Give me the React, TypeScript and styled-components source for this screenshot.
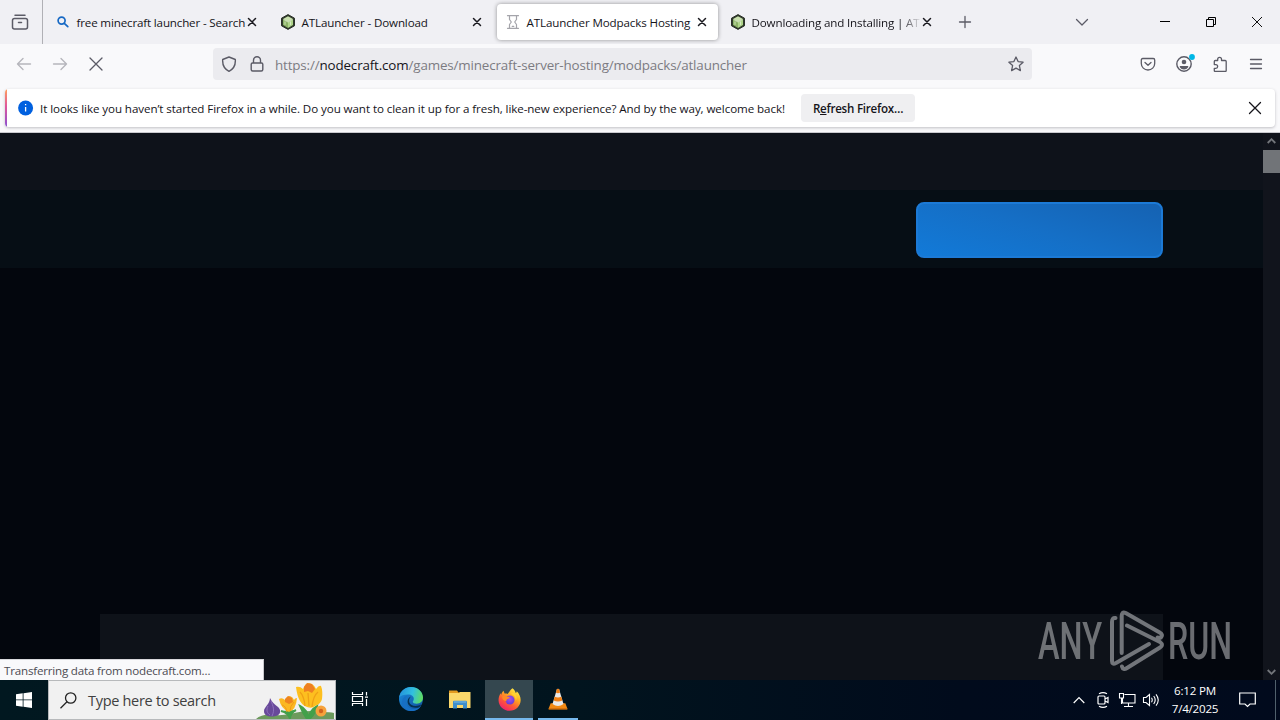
import React from 'react';
import styled, { createGlobalStyle } from 'styled-components';

const Global = createGlobalStyle`
  * { box-sizing: border-box; }
  body { margin: 0; background: #03060d; overflow: hidden; }
  svg { display: block; flex: none; }
`;

const Screen = styled.div`
  width: 1280px;
  height: 720px;
  display: flex;
  flex-direction: column;
  overflow: hidden;
  position: relative;
  font-family: 'Open Sans', 'Noto Sans', sans-serif;
  font-size: 11.6px;
  color: #15141a;
`;

/* ---------- Tab strip ---------- */
const TabStrip = styled.div`
  height: 44px;
  flex: none;
  display: flex;
  align-items: center;
  background: #f0f0f4;
`;
const FirefoxView = styled.div`
  width: 43px;
  height: 44px;
  border-right: 1px solid #b0b0b5;
  display: flex;
  align-items: center;
  padding-left: 11px;
  margin-right: 4px;
`;
const TabBox = styled.div<{ $active?: boolean }>`
  width: 221px;
  height: 36px;
  margin-right: 4px;
  padding-left: 8px;
  display: flex;
  align-items: center;
  border-radius: 4px;
  background: ${p => (p.$active ? '#fff' : 'transparent')};
  box-shadow: ${p => (p.$active ? '0 0 4px rgba(0,0,0,.4)' : 'none')};
`;
const TabTitle = styled.div<{ $spacing: number; $fade?: number }>`
  width: 168.5px;
  margin-left: 5.5px;
  padding-top: 2px;
  line-height: 18px;
  white-space: nowrap;
  letter-spacing: ${p => p.$spacing}px;
  ${p => p.$fade && `mask-image: linear-gradient(to right, #000 ${168 - p.$fade}px, transparent 170px);`}
`;
const CloseSlot = styled.div`
  margin-left: 2px;
`;
const NewTab = styled.div`
  width: 36px;
  display: flex;
  justify-content: center;
`;
const StripSpacer = styled.div`
  flex: 1;
`;
const AllTabs = styled.div`
  width: 36px;
  margin-right: 42px;
  display: flex;
  justify-content: center;
`;
const WindowButton = styled.div`
  width: 46px;
  display: flex;
  justify-content: center;
`;

/* ---------- Navigation ---------- */
const NavBar = styled.div`
  height: 44px;
  flex: none;
  display: flex;
  align-items: center;
  padding: 0 6px;
  background: #f9f9fb;
  margin-bottom: -4px;
  padding-bottom: 4px;
`;
const NavButton = styled.div<{ $dim?: boolean }>`
  width: 36px;
  display: flex;
  justify-content: center;
  opacity: ${p => (p.$dim ? 0.42 : 1)};
`;
const UrlBar = styled.div`
  width: 819px;
  height: 32px;
  margin-left: 99px;
  margin-right: 98px;
  border-radius: 4px;
  background: #ebebef;
  display: flex;
  align-items: center;
  padding: 0 8px;
`;
const UrlText = styled.div`
  flex: 1;
  margin-left: 10px;
  font-size: 13.4px;
  line-height: 20px;
  letter-spacing: -0.15px;
  color: #7c7b82;
  white-space: nowrap;
  padding-top: 1px;
  b { font-weight: 400; color: #15141a; }
`;
const LockSlot = styled.div`
  margin-left: 12px;
`;

/* ---------- Notification ---------- */
const NoticeArea = styled.div`
  height: 49px;
  flex: none;
  padding: 5px 5px 0 5px;
  background: #f9f9fb;
  border-bottom: 1px solid #c9c9ce;
`;
const Notice = styled.div`
  height: 38px;
  display: flex;
  align-items: center;
  border-radius: 4px;
  overflow: hidden;
  background: #fff;
  box-shadow: 0 1px 3px rgba(58, 57, 68, 0.3);
`;
const Accent = styled.div`
  width: 2px;
  height: 38px;
  margin-right: 11px;
  background: linear-gradient(#ff9f5b, #e0569b 45%, #8a4fd0);
`;
const NoticeText = styled.div`
  width: 745px;
  margin-left: 6px;
  margin-right: 16px;
  padding-top: 2px;
  white-space: nowrap;
  line-height: 18px;
  letter-spacing: -0.078px;
`;
const RefreshButton = styled.div`
  width: 114px;
  height: 28px;
  border-radius: 4px;
  background: #efeff1;
  font-weight: 600;
  line-height: 30px;
  text-align: center;
  letter-spacing: -0.25px;
  white-space: nowrap;
`;
const NoticeClose = styled.div`
  margin-left: auto;
  margin-right: 12px;
`;

/* ---------- Web page ---------- */
const Viewport = styled.div`
  height: 547px;
  flex: none;
  display: flex;
  background: #03060d;
`;
const Page = styled.div`
  width: 1263px;
  display: flex;
  flex-direction: column;
`;
const TopBand = styled.div`
  height: 57px;
  background: #0e121a;
`;
const ActionBand = styled.div`
  height: 78px;
  background: #060e15;
  display: flex;
  justify-content: flex-end;
  padding: 12px 100px 0 0;
`;
const BlueButton = styled.div`
  width: 247px;
  height: 56px;
  border-radius: 8px;
  border: 2px solid #1c7ad6;
  background: linear-gradient(17deg, #127ad8, #156fc6 50%, #1562b2);
`;
const Panel = styled.div`
  width: 1063px;
  height: 66px;
  margin: auto 0 0 100px;
  background: #0e1219;
`;
const ScrollBar = styled.div`
  width: 17px;
  background: #11141c;
  display: flex;
  flex-direction: column;
  align-items: center;
  padding: 5px 0 5px;
`;
const Thumb = styled.div`
  width: 17px;
  height: 23px;
  margin-top: 6px;
  margin-bottom: auto;
  background: #717478;
`;

/* ---------- Overlays ---------- */
const StatusPopup = styled.div`
  position: absolute;
  left: 0;
  top: 659px;
  width: 264px;
  height: 21px;
  padding-left: 4px;
  border-top: 1px solid #d8d8dc;
  border-right: 1px solid #c8c8cc;
  background: #f9f9fb;
  color: #4c4b52;
  line-height: 21px;
  letter-spacing: -0.2px;
  white-space: nowrap;
`;
const Watermark = styled.div`
  position: absolute;
  left: 1029px;
  top: 604px;
`;

/* ---------- Taskbar ---------- */
const TaskBar = styled.div`
  height: 40px;
  flex: none;
  display: flex;
  align-items: center;
  background: linear-gradient(90deg, #011820, #01141e 45%, #010b1c 75%, #010a1d);
`;
const StartButton = styled.div`
  width: 48px;
  display: flex;
  justify-content: center;
`;
const SearchBox = styled.div`
  width: 288px;
  height: 40px;
  border: 1px solid #b7b9bb;
  background: #f1f1f1;
  display: flex;
  align-items: center;
  padding-left: 11px;
`;
const SearchText = styled.div`
  width: 168px;
  margin-left: 11px;
  font-size: 14.5px;
  color: #404040;
  letter-spacing: -0.3px;
  white-space: nowrap;
`;
const TaskItem = styled.div<{ $width: number; $active?: boolean; $running?: boolean }>`
  width: ${p => p.$width}px;
  height: 40px;
  display: flex;
  align-items: center;
  justify-content: center;
  background: ${p => (p.$active ? '#34474f' : 'transparent')};
  border-bottom: ${p => (p.$running ? '2px solid #76b9ed' : '2px solid transparent')};
  margin-right: ${p => (p.$active ? 5 : 0)}px;
`;
const Tray = styled.div`
  margin-left: auto;
  display: flex;
  align-items: center;
  color: #fff;
`;
const TrayIcon = styled.div`
  width: 24px;
  display: flex;
  justify-content: center;
`;
const Clock = styled.div`
  width: 64px;
  text-align: center;
  line-height: 18px;
  padding-bottom: 1px;
  letter-spacing: -0.22px;
  white-space: nowrap;
`;
const ActionCenter = styled.div`
  width: 40px;
  display: flex;
  justify-content: center;
`;
const ShowDesktop = styled.div`
  width: 5px;
  height: 40px;
  margin-left: 8px;
  border-left: 1px solid #50606c;
`;

const Icon = ({ children, size = 16, color = '#5b5b66', sw = 1.25 }: {
  children: React.ReactNode; size?: number; color?: string; sw?: number;
}) => (
  <svg width={size} height={size} viewBox={`0 0 ${size} ${size}`} fill="none" stroke={color}
    strokeWidth={sw} strokeLinecap="round" strokeLinejoin="round">{children}</svg>
);

const Cube = () => (
  <svg width="16" height="16" viewBox="0 0 16 16">
    <path d="M8 .6 14.500 4.200v7.600L8 15.400 1.500 11.800V4.200Z" fill="#2f3a2a" stroke="#2b3029" />
    <path d="M8 2.300 13 5.100 8 8 3 5.100Z" fill="#c9e0ad" />
    <path d="M3 5.200 8 8v5.900L3 11.100Z" fill="#8cb267" />
    <path d="M13 5.200 8 8v5.900l5-2.800Z" fill="#afd48a" />
    <path d="M5 7.500v3.300M10.500 7.500v3.500M3.500 5.500 8 8l4.500-2.500" stroke="#e0f1ce" strokeWidth=".8" fill="none" />
  </svg>
);
const Magnifier = () => (
  <Icon color="#1769c4" sw={1.7}><circle cx="6.600" cy="6.600" r="3.500" /><path d="m9.300 9.300 3.500 3.400" /></Icon>
);
const Hourglass = () => (
  <Icon color="#a4a4aa" sw={1.2}>
    <path d="M2.500 1.700h11M2.500 14.300h11M4.500 2v3.500L6.300 8l-1.800 2.500V14M11.500 2v3.500L9.700 8l1.800 2.500V14M7.200 12.300h1.600" />
  </Icon>
);
const CloseX = () => (
  <svg width="10" height="10" viewBox="0 0 10 10" stroke="#1b1a20" strokeWidth="1.500" strokeLinecap="round">
    <path d="m1.500 1.500 7 7M8.500 1.500l-7 7" />
  </svg>
);

type TabProps = { icon: React.ReactNode; title: string; spacing: number; active?: boolean; fade?: number };
const Tab = ({ icon, title, spacing, active, fade }: TabProps) => (
  <TabBox $active={active}>
    {icon}
    <TabTitle $spacing={spacing} $fade={fade}>{title}</TabTitle>
    <CloseSlot><CloseX /></CloseSlot>
  </TabBox>
);

const Edge = () => (
  <svg width="26" height="26" viewBox="0 0 26 26">
    <defs>
      <linearGradient id="edgeTop" x1="0" y1=".3" x2="1" y2=".5">
        <stop offset="0" stopColor="#2492dc" /><stop offset=".55" stopColor="#31bfe0" /><stop offset="1" stopColor="#5fdc62" />
      </linearGradient>
      <linearGradient id="edgeLow" x1="0" y1="0" x2="1" y2="1">
        <stop offset="0" stopColor="#1d8fe0" /><stop offset="1" stopColor="#0f4f9c" />
      </linearGradient>
    </defs>
    <circle cx="13" cy="13" r="12" fill="url(#edgeLow)" />
    <path d="M1.200 11.500C2 5.500 7 1 13 1c7 0 12 5 12 10.500 0 4-3 6.200-6.200 6.200-2.600 0-4-1-4-2 0-.8 1-1.200 1-3 0-2.200-2.200-4.200-5.800-4.200-4 0-7.500 1-8.800 3Z" fill="url(#edgeTop)" />
    <path d="M9.500 9.500c-3 3-2.500 9.500 2.500 12.500 4 2 8 .8 11.200-2.500C21 24 16.500 25.500 12 24.900 6 24 2.500 19 4.500 13.500c1-2.400 3-3.700 5-4Z" fill="#176fc4" />
    <path d="M13 10.500c-4 4-1.500 9.500 4.500 9.500 2.500 0 4.500-.8 5.700-1.500-.4.900-1.200 2-2 2.700-5.700 1.800-12.700-1-11.500-6.700.3-1.700 1.500-3.300 3.300-4Z" fill="#062f4f" />
  </svg>
);
const Folder = () => (
  <svg width="24" height="24" viewBox="0 0 24 24">
    <path d="M1 3.500h8l1.500 2H22V9H1Z" fill="#e29a20" />
    <path d="M1 6h10l1-1h10.500V21H1Z" fill="#fbd86b" />
    <path d="M5 21.500V15c0-.8.6-1.300 1.300-1.300h11.200c.8 0 1.500.5 1.500 1.300v6.500h-4V18H9v3.500Z" fill="#3f8fcb" />
    <path d="M6 15h12" stroke="#7ebce4" />
  </svg>
);
const Firefox = () => (
  <svg width="25" height="25" viewBox="0 0 26 26">
    <defs>
      <linearGradient id="ffBody" x1=".85" y1=".05" x2=".25" y2="1">
        <stop offset="0" stopColor="#fff04a" /><stop offset=".35" stopColor="#ffac20" />
        <stop offset=".65" stopColor="#ff5a36" /><stop offset="1" stopColor="#ee1d70" />
      </linearGradient>
      <radialGradient id="ffCore" cx=".5" cy=".4" r=".6">
        <stop offset="0" stopColor="#a850e8" /><stop offset="1" stopColor="#643bd8" />
      </radialGradient>
    </defs>
    <path d="M16 1.300c2 1.200 3 3.200 3.500 5 .8-.6 1-1.300 1-1.900C23 6.500 24.600 10 24.600 13.600 24.600 20 19.500 24.800 13.200 24.800S1.600 20 1.600 13.500c0-3 1-5.300 2.300-7 .1.700.3 1.200.6 1.600.2-1.600 1.100-3 2.500-4.100 0 1.300.5 2.200 1.200 2.900 1-.2 2 0 2.900.3 1.300-.9 2-3.500 4.900-5.900Z" fill="url(#ffBody)" />
    <circle cx="13.500" cy="13.500" r="4.700" fill="url(#ffCore)" />
    <path d="M5.500 9.700c2.500-1.200 4 .3 6.500.5 1.800.1 1.500 1.300-.3 2-1.600.5-2.200 1.400-1.700 2.500-3.200-.3-5-2.400-4.500-5Z" fill="#ff8a25" />
    <path d="M14.500 7c3 .8 5.300 3.700 5 7.300 2-3.300.6-6.800-2-8.500Z" fill="#ffd333" />
  </svg>
);
const Cone = () => (
  <svg width="22" height="24" viewBox="0 0 24 26">
    <path d="M4 17.500h16l2.300 6q.2 1-1 1H2.700q-1.200 0-1-1Z" fill="#f28a14" />
    <path d="M10.700 2.500q1.300-1.200 2.600 0L18 18.500q-6 4-12 0Z" fill="#e9e9e9" />
    <path d="M10.700 2.500q1.300-1.200 2.600 0l1 3.500q-2.300 1.200-4.600 0ZM8.400 10.500q3.600 1.800 7.200 0l1.200 4q-4.800 2.500-9.600 0Z" fill="#f07f13" />
    <path d="M2 23.700h20" stroke="#cc6508" />
  </svg>
);
const Flowers = () => (
  <svg width="78" height="38" viewBox="0 0 78 38">
    <path d="M0 38Q5 33 16 33.500Q24 35 34 33Q52 28 66 31Q74 31 78 32V38Z" fill="#6c9a5c" />
    <path d="M25 30q8 2 9 8 0-6 6-9M44 25q8 4 8 13 2-9 9-13-2 9-9 14Q47 33 44 25Z" stroke="#43a04a" strokeWidth="2" fill="#43a04a" />
    <path d="M14 17c0 6-6 9-6 13 0 4 3 5.500 8 5.500s9-2 8-6.500c-1-4-6-4-10-12Z" fill="#68499a" />
    <path d="M15 20c2 5 4 9 1 15M12 25c-2 4-1 7 2 9" stroke="#8e70bd" fill="none" />
    <path d="M23 18q3-2 6 1 2-4 5-4 3 1 4 4 1-2 3-2-1 12-8 14-8-3-10-13Z" fill="#fbb822" />
    <path d="M26 24q4 1 5 7M38 21q-4 4-4 9" stroke="#f39a18" fill="none" />
    <path d="m29 18 3-3 4 2 1 4-4 2-4-2Z" fill="#ee8420" />
    <path d="M40 6q4-1 7 2 2-6 6-6 5 1 7 6 3-4 5-3 2 5 1 13-1 5-7 7-3 3-8 1-9-3-11-20Z" fill="#fdbf1f" />
    <path d="M44 11q4 4 5 14M62 11q-5 4-6 15M52 12l1 13" stroke="#f0a016" strokeWidth="1.300" fill="none" />
    <path d="m48 6 3-4 5 1 3 5-3 4-4-2-4 1Z" fill="#ee7f22" />
    <circle cx="65" cy="30" r="5.500" fill="#f6a23c" /><circle cx="65" cy="30" r="2.200" fill="#d3641d" />
  </svg>
);

const Logo = () => (
  <svg width="240" height="74" viewBox="0 0 240 74" opacity=".66">
    <g fill="#a0a2a5" fontFamily="Roboto, sans-serif" fontSize="51" fontWeight="500">
      <text x="9" y="55" textLength="64" lengthAdjust="spacingAndGlyphs">ANY</text>
      <text x="139" y="55" textLength="64" lengthAdjust="spacingAndGlyphs">RUN</text>
    </g>
    <g fill="none" stroke="#a6a8ac" strokeWidth="4" strokeLinejoin="round" strokeLinecap="round">
      <path d="M86.500 14q-3.500-.5-3.500 4v39q0 4 4 2L120 40" />
      <path d="M92.700 49V12q0-5 4-3l34 19.500q3.500 2 1.500 4.500-1.500 1.500-3.500.5" />
      <path d="M98 21.500 131 38q4 3 0 5.500L98 64q-4 2.500-5-1.500" />
    </g>
  </svg>
);

export default function App() {
  return (
    <Screen>
      <Global />
      <TabStrip>
        <FirefoxView>
          <Icon size={18} sw={1.5}>
            <path d="M4 2.200h10M3.500 5.500h11q2 0 2 2V14q0 2-2 2h-11q-2 0-2-2V7.500q0-2 2-2ZM7.500 9.500h3" />
          </Icon>
        </FirefoxView>
        <Tab icon={<Magnifier />} title="free minecraft launcher - Search" spacing={-0.16} />
        <Tab icon={<Cube />} title="ATLauncher - Download" spacing={-0.13} />
        <Tab icon={<Hourglass />} title="ATLauncher Modpacks Hosting" spacing={-0.13} active />
        <Tab icon={<Cube />} title="Downloading and Installing | AT" spacing={-0.15} fade={20} />
        <NewTab><Icon sw={1.3}><path d="M8 2.500v11M2.500 8h11" /></Icon></NewTab>
        <StripSpacer />
        <AllTabs><Icon><path d="m2.500 5.500 5.500 5.500 5.500-5.500" /></Icon></AllTabs>
        <WindowButton>
          <svg width="10" height="10"><path d="M0 4.500h10" stroke="#000" /></svg>
        </WindowButton>
        <WindowButton>
          <svg width="10" height="10" fill="none" stroke="#000"><path d="M.5 2.500h7v7h-7ZM2.500 2.500v-2h7v7h-2" /></svg>
        </WindowButton>
        <WindowButton>
          <svg width="10" height="10" stroke="#111"><path d="m0 0 10 10M10 0 0 10" /></svg>
        </WindowButton>
      </TabStrip>

      <NavBar>
        <NavButton $dim><Icon sw={1.4}><path d="M14.500 8H1.500M7 2.500 1.500 8 7 13.500" /></Icon></NavButton>
        <NavButton $dim><Icon sw={1.4}><path d="M1.500 8h13M9 2.500 14.500 8 9 13.500" /></Icon></NavButton>
        <NavButton><Icon sw={1.3}><path d="m2 2 12 12M14 2 2 14" /></Icon></NavButton>
        <UrlBar>
          <Icon sw={1.4}><path d="M8 1 14.300 3.500c.4 5-1.300 9.200-6.300 11.800C3 12.700 1.300 8.500 1.700 3.500Z" /></Icon>
          <LockSlot>
            <Icon sw={1.4}><path d="M3.500 7h9q1.300 0 1.300 1.300v5.200q0 1.500-1.500 1.500H3.700q-1.500 0-1.500-1.500V8.300Q2.200 7 3.500 7ZM4.500 7V4.200a3.500 3.500 0 0 1 7 0V7" /></Icon>
          </LockSlot>
          <UrlText>https://<b>nodecraft.com</b>/games/minecraft-server-hosting/modpacks/atlauncher</UrlText>
          <Icon sw={1.3}><path d="m8 1 2.100 4.600 5 .6-3.700 3.400 1 5L8 12.100l-4.400 2.500 1-5L.9 6.200l5-.6Z" /></Icon>
        </UrlBar>
        <NavButton>
          <Icon sw={1.3}><path d="M2.800 2.500h10.400q1.500 0 1.500 1.500v3.500a6.700 6.500 0 0 1-13.400 0V4q0-1.500 1.500-1.500ZM5 6.500l3 2.800 3-2.800" /></Icon>
        </NavButton>
        <NavButton>
          <svg width="22" height="20" viewBox="-3 -2 22 20">
            <circle cx="8" cy="8" r="7.200" fill="none" stroke="#5b5b66" strokeWidth="1.400" />
            <circle cx="8" cy="6" r="2.300" fill="#5b5b66" />
            <path d="M3.800 10h8.400v1.200a5 5 0 0 1-8.400 0Z" fill="#5b5b66" />
            <circle cx="16" cy="1" r="2.900" fill="#00b7e6" />
          </svg>
        </NavButton>
        <NavButton>
          <Icon sw={1.3}><path d="M2.300 7V5.500q0-1 1-1h2.400V3.300a1.900 1.900 0 0 1 3.800 0v1.200h3.700q1 0 1 1v9q0 1-1 1H3.300q-1 0-1-1v-2.200h1.500a1.800 1.800 0 0 0 0-3.700H2.300Z" /></Icon>
        </NavButton>
        <NavButton><Icon sw={1.3}><path d="M2.500 3.500h11M2.500 8h11M2.500 12.500h11" /></Icon></NavButton>
      </NavBar>

      <NoticeArea>
        <Notice>
          <Accent />
          <svg width="16" height="16" viewBox="0 0 16 16">
            <circle cx="7.600" cy="8" r="7.500" fill="#0060df" />
            <path d="M7.600 7v4.500M7.600 4v1.300" stroke="#fff" strokeWidth="1.300" />
          </svg>
          <NoticeText>It looks like you haven’t started Firefox in a while. Do you want to clean it up for a fresh, like-new experience? And by the way, welcome back!</NoticeText>
          <RefreshButton>R<u>e</u>fresh Firefox…</RefreshButton>
          <NoticeClose><Icon color="#15141a" sw={1.3}><path d="m2.500 2.500 11 11M13.500 2.500l-11 11" /></Icon></NoticeClose>
        </Notice>
      </NoticeArea>

      <Viewport>
        <Page>
          <TopBand />
          <ActionBand><BlueButton /></ActionBand>
          <Panel />
        </Page>
        <ScrollBar>
          <svg width="9" height="6" fill="none" stroke="#72757a" strokeWidth="1.800"><path d="m.7 5 3.800-3.800L8.300 5" /></svg>
          <Thumb />
          <svg width="9" height="6" fill="none" stroke="#72757a" strokeWidth="1.800"><path d="m.7 1 3.800 3.800L8.300 1" /></svg>
        </ScrollBar>
      </Viewport>

      <TaskBar>
        <StartButton>
          <svg width="16" height="16" viewBox="0 0 16 16" fill="#fff">
            <path d="M0 2.300 6.700 1.300v6.200H0ZM7.500 1.200 16 0v7.500H7.500ZM0 8.300h6.700v6.400L0 13.700ZM7.500 8.300H16V16l-8.500-1.200Z" />
          </svg>
        </StartButton>
        <SearchBox>
          <svg width="17" height="17" viewBox="0 0 17 17" fill="none" stroke="#222" strokeWidth="1.300">
            <circle cx="10.700" cy="6" r="5.200" /><path d="m7 9.700-6.500 6.500" />
          </svg>
          <SearchText>Type here to search</SearchText>
          <Flowers />
        </SearchBox>
        <TaskItem $width={48}>
          <svg width="18" height="18" viewBox="0 0 18 18" fill="none" stroke="#fff" strokeWidth="1.200">
            <path d="M1.500 2v2.500h10V2M1.500 16v-2.500h10V16M1.500 6.500h10v5h-10ZM15.500 2v3.500M15.500 9v7M14 7.200h3" />
          </svg>
        </TaskItem>
        <TaskItem $width={54}><Edge /></TaskItem>
        <TaskItem $width={43}><Folder /></TaskItem>
        <TaskItem $width={4} />
        <TaskItem $width={48} $active $running><Firefox /></TaskItem>
        <TaskItem $width={40} $running><Cone /></TaskItem>
        <Tray>
          <TrayIcon><svg width="12" height="8" fill="none" stroke="#fff" strokeWidth="1.200"><path d="m.7 7 5.300-5.300L11.300 7" /></svg></TrayIcon>
          <TrayIcon>
            <svg width="14" height="18" viewBox="0 0 14 18" fill="none" stroke="#fff" strokeWidth="1.200">
              <path d="M3 5h5q1 0 1 1v6q0 1-1 1H3q-1 0-1-1V6q0-1 1-1ZM9 8l3-1.500v5L9 10M3 2.700q4-2.200 8 0M3 15.300q4 2.200 8 0" />
            </svg>
          </TrayIcon>
          <TrayIcon>
            <svg width="18" height="16" viewBox="0 0 18 16" fill="none" stroke="#fff" strokeWidth="1.100">
              <path d="M6.500 2.500H17v8.500H4.500V6M1.500 1.500h4V6h-4ZM3.500 6v6M10.500 11v3M6 14.500h9" />
            </svg>
          </TrayIcon>
          <TrayIcon>
            <svg width="18" height="16" viewBox="0 0 18 16" fill="none" stroke="#fff" strokeWidth="1.100">
              <path d="M1.500 5.500H4L7.500 2.500v11L4 10.500H1.500ZM9.500 5.700q1.500 2.300 0 4.600M11.700 4q3 4 0 8M14 2.300q4.500 5.700 0 11.400" />
            </svg>
          </TrayIcon>
          <Clock>6:12 PM<br />7/4/2025</Clock>
          <ActionCenter>
            <svg width="17" height="16" viewBox="0 0 17 16" fill="none" stroke="#fff" strokeWidth="1.200">
              <path d="M.7 1h15.600v11H11l-2.500 2.500L6 12H.7Z" />
            </svg>
          </ActionCenter>
          <ShowDesktop />
        </Tray>
      </TaskBar>

      <StatusPopup>Transferring data from nodecraft.com…</StatusPopup>
      <Watermark><Logo /></Watermark>
    </Screen>
  );
}
